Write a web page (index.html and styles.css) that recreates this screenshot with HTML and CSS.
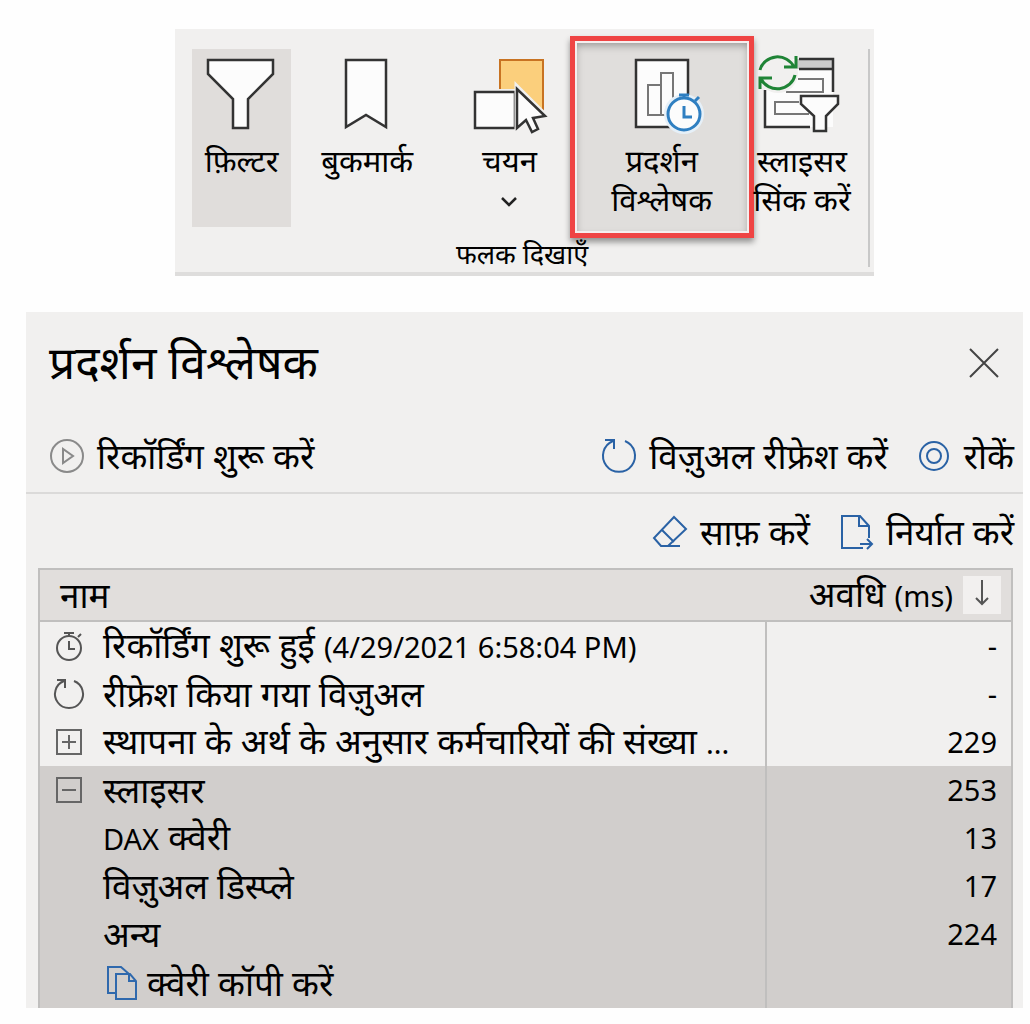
FILE: index.html
```html
<!DOCTYPE html>
<html lang="hi">
  <head>
    <meta charset="UTF-8" />
    <meta name="viewport" content="width=device-width, initial-scale=1.0" />
    <title>प्रदर्शन विश्लेषक</title>
    <link rel="stylesheet" href="styles.css">
  </head>
  <body>
    <section class="ribbon">
      <div class="ribbon-tools">
        <button type="button" class="tool active">
          <svg width="80" height="80" viewBox="0 0 80 80" fill="#fcfcfc" stroke="#333" stroke-width="2.5">
            <path d="M6 7h65v14L46 46v29H31V46L6 21z"/>
          </svg>
          <span>फ़िल्टर</span>
        </button>
        <button type="button" class="tool">
          <svg width="80" height="80" viewBox="0 0 80 80" fill="#fcfcfc" stroke="#333" stroke-width="2.5">
            <path d="M19 7h40v67L39 62 19 74z"/>
          </svg>
          <span>बुकमार्क</span>
        </button>
        <button type="button" class="tool select-tool">
          <svg width="80" height="80" viewBox="0 0 80 80" fill="#fcfcfc" stroke="#333" stroke-width="2.5">
            <path d="M31 7h43v50H31z" fill="#fbcf7c" stroke="#c87322" stroke-width="2"/>
            <path d="M2 36h46v41H2z" fill="#f1f0ef" stroke="none"/>
            <path d="M6 39h40v36H6z"/>
            <path d="M48 34v44l9-7 5 10 8-4-3-9 12-3z" fill="#f1f0ef" stroke="#f1f0ef" stroke-width="5"/>
            <path d="M48 36v39l9-8 6 12 6-3-5-11 12-2z"/>
          </svg>
          <span>चयन</span>
          <svg class="chevron" width="18" height="12" viewBox="0 0 18 12" fill="none" stroke="#222" stroke-width="2.5">
            <path d="M2 2l7 7 7-7"/>
          </svg>
        </button>
        <button type="button" class="tool highlighted">
          <svg width="80" height="80" viewBox="0 0 80 80" fill="#fcfcfc" stroke="#333" stroke-width="2.5">
            <path d="M14 7h52v67H14z"/>
            <path d="M26 32h13v30H26zM39 20h12v42H39z" stroke="#777" stroke-width="2"/>
            <circle cx="62" cy="61" r="20" fill="#e6f0f8" stroke="none"/>
            <circle cx="62" cy="61" r="16" stroke="#2f7fc1" stroke-width="3"/>
            <path d="M62 53v11h8M57 42h10M62 42v4M73 48l4-4" fill="none" stroke="#2f7fc1" stroke-width="3"/>
          </svg>
          <span>प्रदर्शन<br>विश्लेषक</span>
        </button>
        <button type="button" class="tool">
          <svg width="80" height="80" viewBox="0 0 80 80" fill="none" stroke="#333" stroke-width="2.5">
            <path d="M3 6h68v68H3z" fill="#fcfcfc" stroke="none"/>
            <path d="M35 6h36v10H35z" fill="#ccc" stroke="none"/>
            <path d="M37 6h34v33M37 16h34M3 37v37h45"/>
            <path d="M36 26h25v13H24M37 49H13v12h34" stroke="#777" stroke-width="2"/>
            <circle cx="16" cy="20" r="20" fill="#f1f0ef" stroke="none"/>
            <path d="M-2 17a18 17 0 0 1 34-3M34 3v11H22M33 22a18 17 0 0 1-34 4M-2 36V25h12" stroke="#1f8436" stroke-width="3"/>
            <path d="M39 43h37v8L64 63v15H52V63L39 51z" fill="#fcfcfc"/>
          </svg>
          <span>स्लाइसर<br>सिंक करें</span>
        </button>
        <div class="divider"></div>
      </div>
      <p class="ribbon-caption">फलक दिखाएँ</p>
    </section>

    <section class="panel">
      <header class="panel-header">
        <h1>प्रदर्शन विश्लेषक</h1>
        <button type="button" class="close" aria-label="बंद करें">
          <svg width="32" height="32" viewBox="0 0 32 32" fill="none" stroke="#444" stroke-width="2">
            <path d="M2 2l28 28M30 2L2 30"/>
          </svg>
        </button>
      </header>

      <div class="toolbar">
        <button type="button" class="action start">
          <svg width="36" height="36" viewBox="0 0 36 36" fill="none" stroke="#8a8a8a" stroke-width="2">
            <circle cx="18" cy="18" r="16"/>
            <path d="M14 11v14l10-7z"/>
          </svg>
          <span>रिकॉर्डिंग शुरू करें</span>
        </button>
        <button type="button" class="action">
          <svg width="36" height="36" viewBox="0 0 36 36" fill="none" stroke="#2a62a5" stroke-width="2">
            <path d="M12 3A16 16 0 1 0 24 3M4 2h9v9"/>
          </svg>
          <span>विज़ुअल रीफ्रेश करें</span>
        </button>
        <button type="button" class="action">
          <svg width="36" height="36" viewBox="0 0 36 36" fill="none" stroke="#2a62a5" stroke-width="2">
            <circle cx="18" cy="18" r="14"/>
            <circle cx="18" cy="18" r="7"/>
          </svg>
          <span>रोकें</span>
        </button>
      </div>

      <div class="toolbar secondary">
        <button type="button" class="action">
          <svg width="36" height="36" viewBox="0 0 36 36" fill="none" stroke="#2a62a5" stroke-width="2">
            <path d="M22 3l12 12-18 17H9l-7-8zM10 16l12 12M9 32h19"/>
          </svg>
          <span>साफ़ करें</span>
        </button>
        <button type="button" class="action">
          <svg width="36" height="36" viewBox="0 0 36 36" fill="none" stroke="#2a62a5" stroke-width="2">
            <path d="M25 34H4V2h18l9 10v12M21 2v10h10M22 30h12M29 25l5 5-5 5"/>
          </svg>
          <span>निर्यात करें</span>
        </button>
      </div>

      <table class="results">
        <thead>
          <tr>
            <th class="name">नाम</th>
            <th class="duration">
              <div class="sort">
                <span>अवधि <span class="latin">(ms)</span></span>
                <button type="button" aria-label="क्रमित करें">
                  <svg width="16" height="28" viewBox="0 0 16 28" fill="none" stroke="#555" stroke-width="2">
                    <path d="M8 1v24M2 19l6 6 6-6"/>
                  </svg>
                </button>
              </div>
            </th>
          </tr>
        </thead>
        <tbody>
          <tr>
            <td>
              <div class="cell">
                <svg width="32" height="32" viewBox="0 0 32 32" fill="none" stroke="#555" stroke-width="2">
                  <circle cx="16" cy="18" r="12"/>
                  <path d="M16 11v8h6M11 3h10M16 3v3M25 7l3-3"/>
                </svg>
                <span>रिकॉर्डिंग शुरू हुई <span class="latin">(4/29/2021 6:58:04 PM)</span></span>
              </div>
            </td>
            <td class="value">-</td>
          </tr>
          <tr>
            <td>
              <div class="cell">
                <svg width="32" height="32" viewBox="0 0 32 32" fill="none" stroke="#555" stroke-width="2">
                  <path d="M11 3A14 14 0 1 0 21 3M4 2h8v8"/>
                </svg>
                <span>रीफ्रेश किया गया विज़ुअल</span>
              </div>
            </td>
            <td class="value">-</td>
          </tr>
          <tr>
            <td>
              <div class="cell">
                <svg width="32" height="32" viewBox="0 0 32 32" fill="none" stroke="#666" stroke-width="2">
                  <path d="M4 4h24v24H4zM9 16h14M16 9v14"/>
                </svg>
                <span>स्थापना के अर्थ के अनुसार कर्मचारियों की संख्या <span class="latin">...</span></span>
              </div>
            </td>
            <td class="value">229</td>
          </tr>
          <tr class="selected">
            <td>
              <div class="cell">
                <svg width="32" height="32" viewBox="0 0 32 32" fill="none" stroke="#666" stroke-width="2">
                  <path d="M4 4h24v24H4zM9 16h14"/>
                </svg>
                <span>स्लाइसर</span>
              </div>
            </td>
            <td class="value">253</td>
          </tr>
          <tr class="selected">
            <td><div class="cell child"><span><span class="latin">DAX</span> क्वेरी</span></div></td>
            <td class="value">13</td>
          </tr>
          <tr class="selected">
            <td><div class="cell child">विज़ुअल डिस्प्ले</div></td>
            <td class="value">17</td>
          </tr>
          <tr class="selected">
            <td><div class="cell child">अन्य</div></td>
            <td class="value">224</td>
          </tr>
          <tr class="selected">
            <td>
              <div class="cell child">
                <button type="button" class="action copy">
                  <svg width="36" height="36" viewBox="0 0 36 36" fill="none" stroke="#2f69ad" stroke-width="2">
                    <path d="M12 28H5V2h13l8 7M13 9h14l6 7v18H13zM26 9v7h7"/>
                  </svg>
                  <span>क्वेरी कॉपी करें</span>
                </button>
              </div>
            </td>
            <td class="value"></td>
          </tr>
        </tbody>
      </table>
    </section>
  </body>
</html>
```

FILE: styles.css
```css
* {
  box-sizing: border-box;
}
body {
  margin: 0;
  padding: 29px 7px 18px 26px;
  background-color: #fefefe;
  color: #000;
  font-family: "Noto Sans", "Noto Sans Devanagari", sans-serif;
  font-size: 35px;
  line-height: 48px;
}
button {
  margin: 0;
  padding: 0;
  border: 0;
  background: none;
  color: inherit;
  font: inherit;
  cursor: pointer;
}
svg {
  display: block;
  flex: none;
  overflow: visible;
}
.latin {
  font-size: 29px;
}

/* ribbon */
.ribbon {
  margin: 0 149px 0 149px;
  padding: 20px 4px 0 17px;
  background-color: #f1f0ef;
  border-bottom: 4px solid #dedddc;
}
.ribbon-tools {
  display: grid;
  grid-template-columns: minmax(0, 99fr) minmax(0, 152fr) minmax(0, 126fr) minmax(0, 184fr) minmax(0, 96fr) minmax(0, 20fr);
  height: 178px;
}
.tool {
  display: flex;
  flex-direction: column;
  align-items: center;
  padding-top: 4px;
  font-size: 31px;
  line-height: 39px;
  white-space: nowrap;
}
.tool span {
  margin-top: 8px;
}
.active {
  background-color: #e0dddb;
}
.select-tool {
  padding-left: 6px;
}
.chevron {
  margin-top: 16px;
}
.highlighted {
  margin: -13px 0 -11px;
  padding-top: 12px;
  background-color: #e0dedc;
  border: 5px solid #ef4444;
  box-shadow: 0 4px 6px rgba(0, 0, 0, 0.4), inset 0 0 0 2px #f5eeee, inset 0 4px 8px rgba(0, 0, 0, 0.35);
}
.divider {
  margin-bottom: -40px;
  border-right: 2px solid #c8c8c8;
}
.ribbon-caption {
  margin: 9px 0 0;
  padding-right: 18px;
  font-size: 27px;
  line-height: 36px;
  text-align: center;
}

/* panel */
.panel {
  margin-top: 36px;
  background-color: #f1f0ef;
}
.panel-header {
  display: flex;
  align-items: center;
  justify-content: space-between;
  height: 102px;
  padding: 0 23px;
}
h1 {
  margin: 0;
  padding-bottom: 4px;
  font-size: 46px;
  font-weight: 400;
}
.toolbar {
  display: flex;
  align-items: center;
  justify-content: flex-end;
  gap: 28px;
  height: 80px;
  padding: 6px 9px 0 23px;
  border-bottom: 2px solid #dbdad9;
}
.secondary {
  height: 74px;
  padding-top: 2px;
  border-bottom: 0;
}
.action {
  display: flex;
  align-items: center;
  gap: 12px;
  white-space: nowrap;
}
.start {
  margin-right: auto;
}

/* results table */
.results {
  width: calc(100% - 22px);
  margin: 0 10px 0 12px;
  border: 2px solid #c0bfbe;
  border-bottom: 0;
  border-spacing: 0;
}
.results th {
  height: 50px;
  padding: 0;
  background-color: #e1dedc;
  border-bottom: 2px solid #c0bfbe;
  font-weight: 400;
}
.results .name {
  padding-left: 20px;
  text-align: left;
}
.duration {
  width: 246px;
}
.sort {
  display: flex;
  align-items: center;
  justify-content: flex-end;
  gap: 10px;
  padding-right: 10px;
  white-space: nowrap;
}
.sort button {
  display: flex;
  justify-content: center;
  width: 38px;
  height: 38px;
  padding-top: 3px;
  background-color: #f2f0ef;
}
.results td {
  height: 48px;
  padding: 0;
  white-space: nowrap;
}
.results tr:last-child td {
  height: 50px;
}
.cell {
  display: flex;
  align-items: center;
  gap: 18px;
  height: 48px;
  padding-left: 13px;
}
.child {
  padding-left: 63px;
}
.results .value {
  padding-right: 14px;
  border-left: 2px solid #c0bfbe;
  font-size: 29px;
  text-align: right;
}
.selected {
  background-color: #d1cecc;
}
.copy {
  gap: 8px;
}
```
